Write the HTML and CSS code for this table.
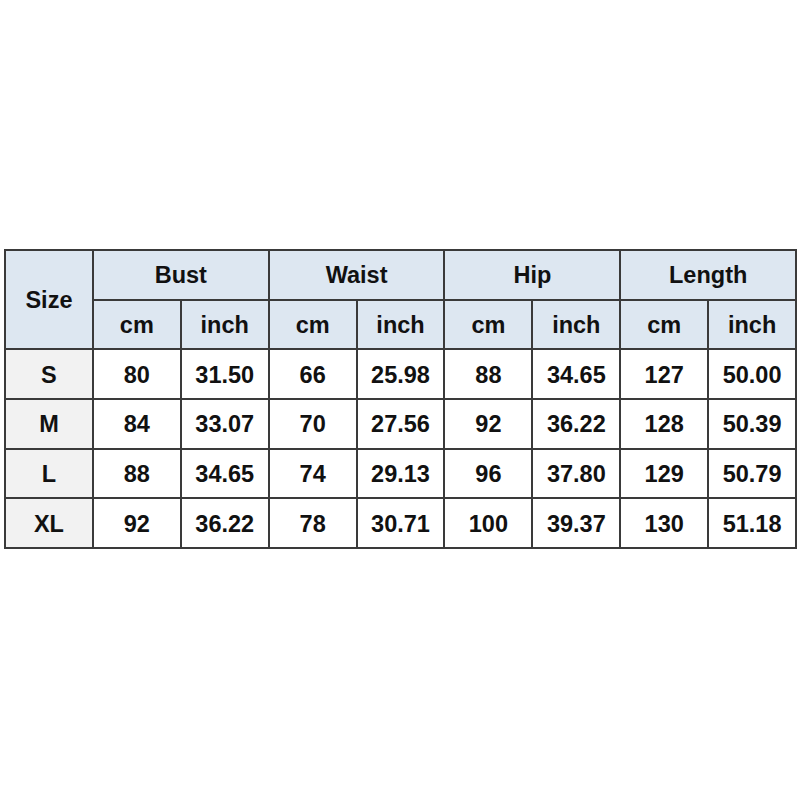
FILE: index.html
```html
<!DOCTYPE html>
<html>
<head>
<meta charset="utf-8">
<link rel="stylesheet" href="styles.css">
</head>
<body>
<div class="page">
<table class="chart">
<colgroup>
<col class="c"><col class="c"><col class="c"><col class="c"><col class="c"><col class="c"><col class="c"><col class="c"><col class="c">
</colgroup>
<thead>
<tr>
<th rowspan="2" class="hd">Size</th>
<th colspan="2" class="hd">Bust</th>
<th colspan="2" class="hd">Waist</th>
<th colspan="2" class="hd">Hip</th>
<th colspan="2" class="hd">Length</th>
</tr>
<tr>
<th class="hd">cm</th><th class="hd">inch</th>
<th class="hd">cm</th><th class="hd">inch</th>
<th class="hd">cm</th><th class="hd">inch</th>
<th class="hd">cm</th><th class="hd">inch</th>
</tr>
</thead>
<tbody>
<tr><td class="sz">S</td><td>80</td><td>31.50</td><td>66</td><td>25.98</td><td>88</td><td>34.65</td><td>127</td><td>50.00</td></tr>
<tr><td class="sz">M</td><td>84</td><td>33.07</td><td>70</td><td>27.56</td><td>92</td><td>36.22</td><td>128</td><td>50.39</td></tr>
<tr><td class="sz">L</td><td>88</td><td>34.65</td><td>74</td><td>29.13</td><td>96</td><td>37.80</td><td>129</td><td>50.79</td></tr>
<tr><td class="sz">XL</td><td>92</td><td>36.22</td><td>78</td><td>30.71</td><td>100</td><td>39.37</td><td>130</td><td>51.18</td></tr>
</tbody>
</table>
</div>
</body>
</html>
```
FILE: styles.css
```css
html, body {
  margin: 0;
  padding: 0;
  background: #ffffff;
}
.page {
  width: 800px;
  height: 800px;
  padding-top: 249px;
  padding-left: 4px;
  box-sizing: border-box;
}
.chart {
  border-collapse: collapse;
  table-layout: fixed;
  width: 791px;
  font-family: "Liberation Sans", Arial, sans-serif;
  font-weight: bold;
  font-size: 23.5px;
  color: #111111;
}
.c { width: 87.9px; }
.chart th, .chart td {
  border: 2px solid #3a3a3a;
  text-align: center;
  vertical-align: middle;
  padding: 2px 0 0 0;
  height: 45.7px;
  font-weight: bold;
}
.hd {
  background: #dde7f1;
}
.sz {
  background: #f2f2f2;
}
```
